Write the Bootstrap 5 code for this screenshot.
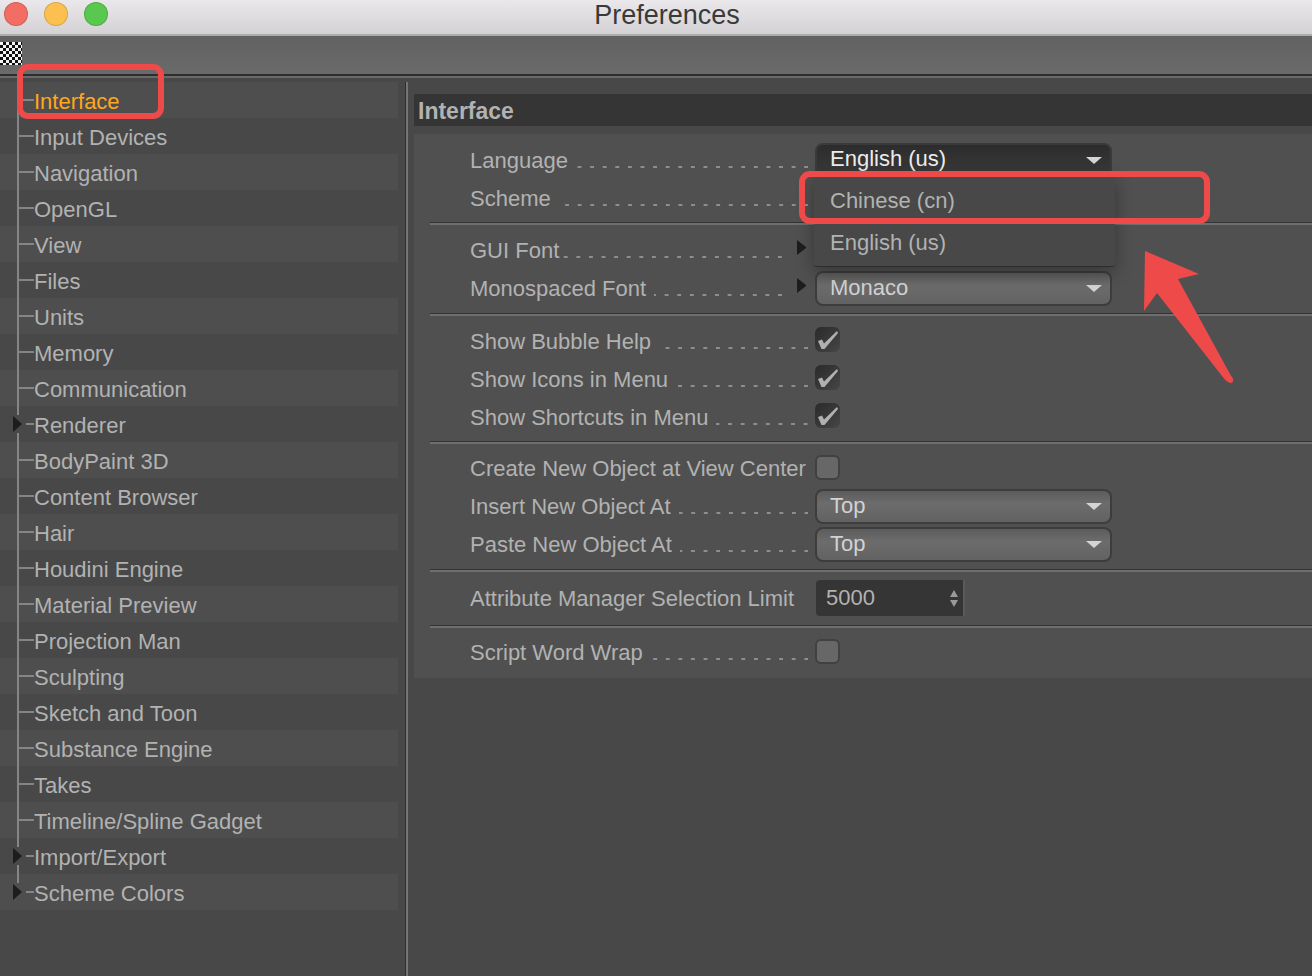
<!DOCTYPE html>
<html lang="en">
<head>
  <meta charset="UTF-8" />
  <meta name="viewport" content="width=device-width, initial-scale=1">
  <title>Preferences</title>
  <link href="https://cdn.jsdelivr.net/npm/bootstrap@5.3.0/dist/css/bootstrap.min.css" rel="stylesheet">
  <style>
    html, body {
      height: 976px;
      overflow: hidden;
    }
    body {
      position: relative;
      background: #484848;
      font-family: "Liberation Sans", Arial, sans-serif;
      font-size: 22px;
      color: #b2b2b2;
    }
    .titleBar {
      height: 36px;
      padding-left: 22px;
      background: linear-gradient(#eae8ea, #d3d1d3);
      border-bottom: 2px solid #adadad;
      color: #3a3a3a;
      font-size: 27px;
      line-height: 30px;
    }
    .winDot {
      width: 24px;
      height: 24px;
      border-radius: 50%;
      border: 1px solid rgba(0, 0, 0, .14);
    }
    .winRed { background: #f26d63; }
    .winYellow { background: #fbc04f; }
    .winGreen { background: #5ac84f; }
    .winDots { left: 4px; top: 2px; gap: 16px; }
    .toolBar {
      height: 40px;
      padding-top: 6px;
      background: linear-gradient(#626262, #6a6a6a);
      border-bottom: 2px solid #2e2e2e;
    }
    .checker {
      width: 22px;
      height: 23px;
      background: repeating-conic-gradient(#111 0 25%, #f4f4f4 0 50%) 0 0 / 6px 6px;
    }
    .toolEdge {
      height: 6px;
      background: linear-gradient(#6a6a6a 0 2px, #484848 2px);
    }
    .workArea { height: 894px; }
    .sidePane {
      width: 398px;
      flex: none;
    }
    .treeRow {
      position: relative;
      height: 36px;
      line-height: 39px;
      padding-left: 34px;
      background: #484848;
      white-space: nowrap;
    }
    .treeRow:nth-child(odd) { background: #4e4e4e; }
    .treeRow::before {
      content: "";
      position: absolute;
      left: 17px;
      top: 0;
      bottom: 0;
      width: 2px;
      background: #858585;
    }
    .treeRow::after {
      content: "";
      position: absolute;
      left: 18px;
      top: 17px;
      width: 16px;
      height: 2px;
      background: #858585;
    }
    .treeRow:last-child::before { bottom: 18px; }
    .treeOpen::after { left: 26px; width: 8px; }
    .treeOpener {
      position: absolute;
      left: 12px;
      top: 9px;
      width: 12px;
      height: 18px;
      background: inherit;
      z-index: 1;
    }
    .treeOpener::after {
      content: "";
      position: absolute;
      left: 1px;
      top: 1px;
      border-style: solid;
      border-width: 8px 0 8px 9px;
      border-color: transparent transparent transparent #1d1d1d;
    }
    .activeRow { color: #ffa81c; }
    .paneDivider {
      width: 3px;
      flex: none;
      margin-left: 7px;
      margin-right: 6px;
      background: linear-gradient(90deg, #2f2f2f 0 1px, #757575 1px);
    }
    .mainPane {
      min-width: 0;
      padding-top: 12px;
    }
    .paneHead {
      height: 32px;
      line-height: 34px;
      padding-left: 4px;
      background: #353535;
      font-size: 23px;
      font-weight: 700;
      margin-bottom: 8px;
    }
    .prefPanel {
      background: #505050;
      height: 544px;
      padding-top: 7px;
    }
    .prefRule {
      height: 3px;
      margin-left: 16px;
      background: linear-gradient(#333 0 1px, #6e6e6e 1px);
    }
    .grpA { padding-bottom: 5px; }
    .grpB { padding-top: 6px; padding-bottom: 6px; }
    .grpC { padding-top: 6px; padding-bottom: 5px; }
    .grpD { padding-top: 5px; padding-bottom: 6px; }
    .grpE { padding-top: 7px; padding-bottom: 8px; }
    .grpF { padding-top: 5px; }
    .prefRow {
      height: 38px;
      padding-left: 56px;
    }
    .prefLabel {
      width: 338px;
      flex: none;
      white-space: nowrap;
    }
    .prefLabelShort { width: 312px; }
    .leader {
      flex: 1 1 0;
      height: 2px;
      margin: 22px 0 0 8px;
      background: linear-gradient(90deg, transparent 0 9px, #8e8e8e 9px) right center / 12.6px 2px repeat-x;
    }
    .leaderNear { margin-left: 3px; }
    .fontArrow {
      width: 9px;
      height: 15px;
      margin: -6px 0 0 15px;
      flex: none;
      border-style: solid;
      border-width: 7.5px 0 7.5px 9px;
      border-color: transparent transparent transparent #1d1d1d;
    }
    .fontGap { width: 9px; flex: none; }
    .selectBox {
      position: relative;
      width: 297px;
      height: 35px;
      margin-left: 7px;
      padding-left: 13px;
      line-height: 29px;
      flex: none;
      border: 2px solid #3d3d3d;
      border-radius: 8px;
      background: linear-gradient(#5c5c5c, #6c6c6c 40%, #626262);
      color: #d2d2d2;
    }
    .afterFont { margin-left: 0; }
    .selectBox::after {
      content: "";
      position: absolute;
      right: 8px;
      top: 12px;
      border-style: solid;
      border-width: 7px 8px 0 8px;
      border-color: #d4d4d4 transparent transparent transparent;
    }
    .selectOpen {
      line-height: 27px;
      background: linear-gradient(#2c2c2c, #3a3a3a);
      border-color: #3a3a3a;
      color: #ececec;
    }
    .popMenu {
      display: block;
      left: -3px;
      top: 31px;
      width: 301px;
      min-width: 0;
      height: 91px;
      padding: 3px 0 4px;
      margin: 0;
      border: 0;
      border-bottom: 1px solid #2c2c2c;
      border-radius: 0 0 3px 3px;
      background: #484848;
      box-shadow: 0 5px 18px rgba(0, 0, 0, .33);
      font-size: 22px;
      z-index: 2;
    }
    .popMenu .dropdown-item {
      height: 42px;
      line-height: 44px;
      padding: 0 0 0 16px;
      color: #b2b2b2;
      background: none;
    }
    .tick {
      width: 25px;
      height: 25px;
      margin-left: 7px;
      flex: none;
      border-radius: 6px;
      display: block;
    }
    .tickOn {
      margin-bottom: 4px;
      background: linear-gradient(135deg, #2a2a2a, #464646);
    }
    .tickOff {
      margin-bottom: 2px;
      background: #676767;
      border: 2px solid #414141;
    }
    .numBox {
      position: relative;
      width: 149px;
      height: 36px;
      margin-left: 8px;
      padding-left: 10px;
      line-height: 36px;
      flex: none;
      border-radius: 4px 0 0 4px;
      background: #353535;
      border-right: 2px solid #5a5a5a;
    }
    .numSpin {
      position: absolute;
      right: 4px;
      top: 10px;
    }
    .marker {
      position: absolute;
      border: 6px solid #ee4a4a;
      border-radius: 11px;
      z-index: 3;
      pointer-events: none;
    }
    .markerSide { left: 17px; top: 64px; width: 147px; height: 55px; }
    .markerLang { left: 799px; top: 171px; width: 411px; height: 53px; }
    .markerArrow {
      position: absolute;
      left: 1130px;
      top: 240px;
      z-index: 3;
    }
  </style>
</head>
<body>
  <div class="titleBar position-relative text-center">
    <div class="winDots position-absolute d-flex">
      <span class="winDot winRed"></span>
      <span class="winDot winYellow"></span>
      <span class="winDot winGreen"></span>
    </div>
    <span>Preferences</span>
  </div>
  <div class="toolBar"><div class="checker"></div></div>
  <div class="toolEdge"></div>

  <div class="workArea d-flex">
    <ul class="sidePane list-unstyled m-0">
      <li class="treeRow activeRow">Interface</li>
      <li class="treeRow">Input Devices</li>
      <li class="treeRow">Navigation</li>
      <li class="treeRow">OpenGL</li>
      <li class="treeRow">View</li>
      <li class="treeRow">Files</li>
      <li class="treeRow">Units</li>
      <li class="treeRow">Memory</li>
      <li class="treeRow">Communication</li>
      <li class="treeRow treeOpen"><span class="treeOpener"></span>Renderer</li>
      <li class="treeRow">BodyPaint 3D</li>
      <li class="treeRow">Content Browser</li>
      <li class="treeRow">Hair</li>
      <li class="treeRow">Houdini Engine</li>
      <li class="treeRow">Material Preview</li>
      <li class="treeRow">Projection Man</li>
      <li class="treeRow">Sculpting</li>
      <li class="treeRow">Sketch and Toon</li>
      <li class="treeRow">Substance Engine</li>
      <li class="treeRow">Takes</li>
      <li class="treeRow">Timeline/Spline Gadget</li>
      <li class="treeRow treeOpen"><span class="treeOpener"></span>Import/Export</li>
      <li class="treeRow treeOpen"><span class="treeOpener"></span>Scheme Colors</li>
    </ul>
    <div class="paneDivider"></div>

    <div class="mainPane flex-grow-1">
      <div class="paneHead">Interface</div>
      <div class="prefPanel">
        <div class="grpA">
          <div class="prefRow d-flex align-items-center">
            <div class="prefLabel d-flex"><span>Language</span><span class="leader"></span></div>
            <div class="selectBox selectOpen">English (us)
              <div class="dropdown-menu popMenu">
                <a class="dropdown-item" href="#">Chinese (cn)</a>
                <a class="dropdown-item" href="#">English (us)</a>
              </div>
            </div>
          </div>
          <div class="prefRow d-flex align-items-center">
            <div class="prefLabel d-flex"><span>Scheme</span><span class="leader"></span></div>
          </div>
        </div>
        <div class="prefRule"></div>
        <div class="grpB">
          <div class="prefRow d-flex align-items-center">
            <div class="prefLabel prefLabelShort d-flex"><span>GUI Font</span><span class="leader leaderNear"></span></div>
            <span class="fontArrow"></span>
          </div>
          <div class="prefRow d-flex align-items-center">
            <div class="prefLabel prefLabelShort d-flex"><span>Monospaced Font</span><span class="leader"></span></div>
            <span class="fontArrow"></span><span class="fontGap"></span>
            <div class="selectBox afterFont">Monaco</div>
          </div>
        </div>
        <div class="prefRule"></div>
        <div class="grpC">
          <div class="prefRow d-flex align-items-center">
            <div class="prefLabel d-flex"><span>Show Bubble Help</span><span class="leader"></span></div>
            <svg class="tick tickOn" viewBox="0 0 25 25"><path d="M3 14l4-1.500 2 4L22 4l1 2L9.500 22H6.500z" fill="#b0b0b0"/></svg>
          </div>
          <div class="prefRow d-flex align-items-center">
            <div class="prefLabel d-flex"><span>Show Icons in Menu</span><span class="leader"></span></div>
            <svg class="tick tickOn" viewBox="0 0 25 25"><path d="M3 14l4-1.500 2 4L22 4l1 2L9.500 22H6.500z" fill="#b0b0b0"/></svg>
          </div>
          <div class="prefRow d-flex align-items-center">
            <div class="prefLabel d-flex"><span>Show Shortcuts in Menu</span><span class="leader"></span></div>
            <svg class="tick tickOn" viewBox="0 0 25 25"><path d="M3 14l4-1.500 2 4L22 4l1 2L9.500 22H6.500z" fill="#b0b0b0"/></svg>
          </div>
        </div>
        <div class="prefRule"></div>
        <div class="grpD">
          <div class="prefRow d-flex align-items-center">
            <div class="prefLabel"><span>Create New Object at View Center</span></div>
            <span class="tick tickOff"></span>
          </div>
          <div class="prefRow d-flex align-items-center">
            <div class="prefLabel d-flex"><span>Insert New Object At</span><span class="leader"></span></div>
            <div class="selectBox">Top</div>
          </div>
          <div class="prefRow d-flex align-items-center">
            <div class="prefLabel d-flex"><span>Paste New Object At</span><span class="leader"></span></div>
            <div class="selectBox">Top</div>
          </div>
        </div>
        <div class="prefRule"></div>
        <div class="grpE">
          <div class="prefRow d-flex align-items-center">
            <div class="prefLabel"><span>Attribute Manager Selection Limit</span></div>
            <div class="numBox">5000
              <svg class="numSpin" width="10" height="18" viewBox="0 0 10 18"><path d="M5 0l4 7H1zM1 10h8l-4 7z" fill="#9a9a9a"/></svg>
            </div>
          </div>
        </div>
        <div class="prefRule"></div>
        <div class="grpF">
          <div class="prefRow d-flex align-items-center">
            <div class="prefLabel d-flex"><span>Script Word Wrap</span><span class="leader leaderNear"></span></div>
            <span class="tick tickOff"></span>
          </div>
        </div>
      </div>
    </div>
  </div>

  <!-- red annotations on top of the screenshot -->
  <div class="marker markerSide"></div>
  <div class="marker markerLang"></div>
  <svg class="markerArrow" width="110" height="150" viewBox="0 0 110 150">
    <path d="M15 11L69 34 48 39 100 134Q106 142 101 143 97 143 92 136L27 53 14 71z" fill="#ee4a4a"/>
  </svg>

  <script src="https://cdn.jsdelivr.net/npm/bootstrap@5.3.0/dist/js/bootstrap.bundle.min.js"></script>
</body>
</html>
